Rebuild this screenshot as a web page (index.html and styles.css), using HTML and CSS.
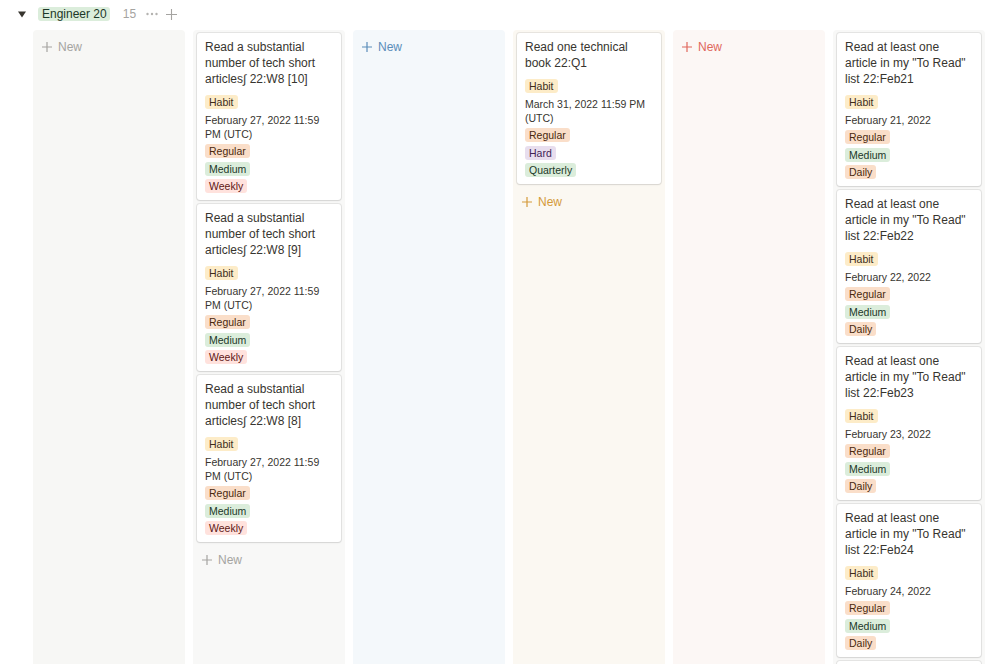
FILE: index.html
```html
<!DOCTYPE html>
<html>
<head>
<meta charset="utf-8">
<link rel="stylesheet" href="styles.css">
</head>
<body>
<div class="header">
  <svg class="caret" width="8" height="7" viewBox="0 0 8 7"><path d="M0 0.5 L8 0.5 L4 6.5 Z" fill="#37352f"/></svg>
  <span class="group-pill">Engineer 20</span>
  <span class="count">15</span>
  <svg class="dots" width="12" height="4" viewBox="0 0 12 4"><circle cx="1.5" cy="2" r="1.2" fill="#b4b3b0"/><circle cx="6" cy="2" r="1.2" fill="#b4b3b0"/><circle cx="10.5" cy="2" r="1.2" fill="#b4b3b0"/></svg>
  <svg class="hplus" width="11" height="11" viewBox="0 0 11 11"><path d="M5.5 0 V11 M0 5.5 H11" stroke="#a5a4a1" stroke-width="1.1"/></svg>
</div>
<div class="board">
  <div class="column col-grey">
    <div class="new new-grey"><svg width="10" height="10" viewBox="0 0 10 10"><path d="M5 0 V10 M0 5 H10" stroke="currentColor" stroke-width="1.2"/></svg><span>New</span></div>
  </div>

  <div class="column col-grey2">
    <div class="card">
      <div class="title">Read a substantial number of tech short articles∫ 22:W8 [10]</div>
      <div class="props">
        <span class="tag t-yellow">Habit</span>
        <div class="date">February 27, 2022 11:59 PM (UTC)</div>
        <span class="tag t-orange">Regular</span>
        <span class="tag t-green">Medium</span>
        <span class="tag t-red">Weekly</span>
      </div>
    </div>
    <div class="card">
      <div class="title">Read a substantial number of tech short articles∫ 22:W8 [9]</div>
      <div class="props">
        <span class="tag t-yellow">Habit</span>
        <div class="date">February 27, 2022 11:59 PM (UTC)</div>
        <span class="tag t-orange">Regular</span>
        <span class="tag t-green">Medium</span>
        <span class="tag t-red">Weekly</span>
      </div>
    </div>
    <div class="card">
      <div class="title">Read a substantial number of tech short articles∫ 22:W8 [8]</div>
      <div class="props">
        <span class="tag t-yellow">Habit</span>
        <div class="date">February 27, 2022 11:59 PM (UTC)</div>
        <span class="tag t-orange">Regular</span>
        <span class="tag t-green">Medium</span>
        <span class="tag t-red">Weekly</span>
      </div>
    </div>
    <div class="new new-grey after"><svg width="10" height="10" viewBox="0 0 10 10"><path d="M5 0 V10 M0 5 H10" stroke="currentColor" stroke-width="1.2"/></svg><span>New</span></div>
  </div>

  <div class="column col-blue">
    <div class="new new-blue"><svg width="10" height="10" viewBox="0 0 10 10"><path d="M5 0 V10 M0 5 H10" stroke="currentColor" stroke-width="1.2"/></svg><span>New</span></div>
  </div>

  <div class="column col-yellow">
    <div class="card">
      <div class="title">Read one technical book 22:Q1</div>
      <div class="props">
        <span class="tag t-yellow">Habit</span>
        <div class="date">March 31, 2022 11:59 PM (UTC)</div>
        <span class="tag t-orange">Regular</span>
        <span class="tag t-purple">Hard</span>
        <span class="tag t-green">Quarterly</span>
      </div>
    </div>
    <div class="new new-yellow after"><svg width="10" height="10" viewBox="0 0 10 10"><path d="M5 0 V10 M0 5 H10" stroke="currentColor" stroke-width="1.2"/></svg><span>New</span></div>
  </div>

  <div class="column col-red">
    <div class="new new-red"><svg width="10" height="10" viewBox="0 0 10 10"><path d="M5 0 V10 M0 5 H10" stroke="currentColor" stroke-width="1.2"/></svg><span>New</span></div>
  </div>

  <div class="column col-grey2">
    <div class="card">
      <div class="title">Read at least one article in my "To Read" list 22:Feb21</div>
      <div class="props">
        <span class="tag t-yellow">Habit</span>
        <div class="date">February 21, 2022</div>
        <span class="tag t-orange">Regular</span>
        <span class="tag t-green">Medium</span>
        <span class="tag t-orange">Daily</span>
      </div>
    </div>
    <div class="card">
      <div class="title">Read at least one article in my "To Read" list 22:Feb22</div>
      <div class="props">
        <span class="tag t-yellow">Habit</span>
        <div class="date">February 22, 2022</div>
        <span class="tag t-orange">Regular</span>
        <span class="tag t-green">Medium</span>
        <span class="tag t-orange">Daily</span>
      </div>
    </div>
    <div class="card">
      <div class="title">Read at least one article in my "To Read" list 22:Feb23</div>
      <div class="props">
        <span class="tag t-yellow">Habit</span>
        <div class="date">February 23, 2022</div>
        <span class="tag t-orange">Regular</span>
        <span class="tag t-green">Medium</span>
        <span class="tag t-orange">Daily</span>
      </div>
    </div>
    <div class="card">
      <div class="title">Read at least one article in my "To Read" list 22:Feb24</div>
      <div class="props">
        <span class="tag t-yellow">Habit</span>
        <div class="date">February 24, 2022</div>
        <span class="tag t-orange">Regular</span>
        <span class="tag t-green">Medium</span>
        <span class="tag t-orange">Daily</span>
      </div>
    </div>
    <div class="card">
      <div class="title">Read at least one article in my "To Read" list 22:Feb25</div>
      <div class="props">
        <span class="tag t-yellow">Habit</span>
        <div class="date">February 25, 2022</div>
      </div>
    </div>
  </div>
</div>
</body>
</html>
```

FILE: styles.css
```css
* { box-sizing: border-box; }
html, body { margin: 0; padding: 0; background: #ffffff; overflow: hidden; height: 664px; }
body {
  font-family: "Liberation Sans", Arial, sans-serif;
  color: #37352f;
}
.header {
  height: 30px;
  display: flex;
  align-items: center;
  padding-left: 18px;
  padding-bottom: 2px;
}
.caret { margin-right: 12px; margin-top: 1px; }
.group-pill {
  background: #dbeddb;
  color: #1c3829;
  font-size: 12px;
  line-height: 14px;
  height: 14px;
  padding: 0 3px 0 4px;
  border-radius: 3px;
}
.count {
  color: #a5a4a1;
  font-size: 12px;
  margin-left: 13px;
}
.dots { margin-left: 10px; }
.hplus { margin-left: 8px; }

.board {
  display: flex;
  gap: 8px;
  padding-left: 33px;
  align-items: stretch;
  height: 700px;
}
.column {
  width: 152px;
  flex: none;
  padding: 3px 4px;
  border-radius: 4px 4px 0 0;
  display: flex;
  flex-direction: column;
  gap: 4px;
}
.col-grey { background: #f7f7f5; }
.col-grey2 { background: #f8f8f7; }
.col-blue { background: #f4f8fb; }
.col-yellow { background: #fbf8f2; }
.col-red { background: #fcf7f5; }

.card {
  background: #ffffff;
  border-radius: 3px;
  box-shadow: 0 0 0 1px rgba(15,15,15,0.08), 0 1px 2px rgba(15,15,15,0.08);
  padding: 6px 8px 7px;
}
.title {
  font-size: 12px;
  line-height: 16px;
  margin-bottom: 8px;
  color: #37352f;
}
.props {
  display: flex;
  flex-direction: column;
  align-items: flex-start;
  gap: 3.5px;
}
.date {
  font-size: 10.5px;
  line-height: 14px;
  color: #37352f;
}
.tag {
  font-size: 10.5px;
  line-height: 14px;
  height: 14px;
  padding: 0 4px;
  border-radius: 3px;
  white-space: nowrap;
}
.t-yellow { background: #fdecc8; color: #402c1b; }
.t-orange { background: #fadec9; color: #49290e; }
.t-green { background: #dbeddb; color: #1c3829; }
.t-red { background: #ffe2dd; color: #5d1715; }
.t-purple { background: #e8deee; color: #412454; }

.new {
  height: 27px;
  display: flex;
  align-items: center;
  padding-left: 5px;
  gap: 6px;
  font-size: 12px;
}
.new svg { flex: none; }
.new.after { margin-top: 0; }
.new-grey { color: #a5a4a1; }
.new-blue { color: #5a8dba; }
.new-yellow { color: #d49a3a; }
.new-red { color: #e0675c; }
```
